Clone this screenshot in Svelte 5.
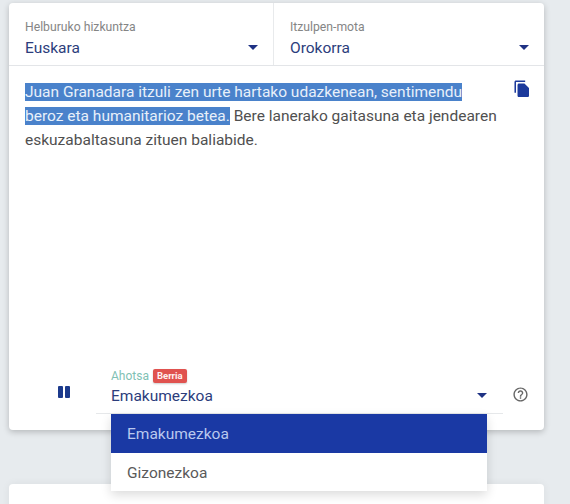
<script>
  const options = ['Emakumezkoa', 'Gizonezkoa'];
  let voice = $state('Emakumezkoa');
</script>

<div class="page">
  <section class="card">
    <header class="selects">
      <div class="select">
        <span class="label">Helburuko hizkuntza</span>
        <span class="value">Euskara</span>
        <i class="caret"></i>
      </div>
      <div class="select">
        <span class="label">Itzulpen-mota</span>
        <span class="value">Orokorra</span>
        <i class="caret"></i>
      </div>
    </header>

    <div class="result">
      <p><span class="said">Juan Granadara itzuli zen urte hartako udazkenean, sentimendu beroz eta humanitarioz betea.</span> Bere lanerako gaitasuna eta jendearen eskuzabaltasuna zituen baliabide.</p>
      <button class="copy" aria-label="Kopiatu">
        <svg viewBox="0 0 24 24" width="17" height="17"><path d="M16 1H4C2.9 1 2 1.9 2 3v14h2V3h12V1zm-1 4 6 6v10c0 1.1-.9 2-2 2H8c-1.1 0-2-.9-2-2l.01-14c0-1.1.89-2 1.99-2h7z" transform="translate(-1.500 -.5) scale(1.08)"/></svg>
      </button>
    </div>

    <footer class="player">
      <button class="pause" aria-label="Pausatu">
        <svg viewBox="0 0 12 12" width="12" height="12"><rect x="0" y="0" width="5" height="12" rx="1"/><rect x="7" y="0" width="5" height="12" rx="1"/></svg>
      </button>
      <div class="voice">
        <div class="voice-label"><span>Ahotsa</span><b>Berria</b></div>
        <span class="value">{voice}</span>
        <i class="caret"></i>
        <ul class="menu">
          {#each options as opt}
            <li class:active={opt === voice}>{opt}</li>
          {/each}
        </ul>
      </div>
      <button class="help" aria-label="Laguntza">
        <svg viewBox="0 0 24 24" width="17" height="17"><path d="M11 18h2v-2h-2v2zm1-16C6.480 2 2 6.480 2 12s4.480 10 10 10 10-4.480 10-10S17.520 2 12 2zm0 18c-4.410 0-8-3.590-8-8s3.590-8 8-8 8 3.590 8 8-3.590 8-8 8zm0-14c-2.210 0-4 1.790-4 4h2c0-1.100.9-2 2-2s2 .9 2 2c0 2-3 1.750-3 5h2c0-2.250 3-2.500 3-5 0-2.210-1.790-4-4-4z"/></svg>
      </button>
    </footer>
  </section>
  <div class="next"></div>
</div>

<style>
  :global(body) {
    margin: 0;
    background: #e7ebee;
    font-family: Roboto, "Liberation Sans", sans-serif;
  }
  .page {
    height: 504px;
    overflow: hidden;
    padding: 3px 26px 0 9px;
    box-sizing: border-box;
  }
  .card {
    height: 427px;
    background: #fff;
    border-radius: 4px;
    box-shadow: 0 2px 6px rgba(0, 0, 0, .22);
    display: flex;
    flex-direction: column;
  }
  .selects {
    display: flex;
    height: 63px;
    flex: none;
    box-sizing: border-box;
    border-bottom: 1px solid #e3e5e8;
  }
  .select {
    flex: 1;
    position: relative;
    padding: 17px 16px 0;
    display: flex;
    flex-direction: column;
  }
  .select:first-child {
    flex: none;
    width: 265px;
    box-sizing: border-box;
    border-right: 1px solid #e8eaec;
  }
  .label {
    font-size: 12.200px;
    line-height: 15px;
    color: #858585;
  }
  .value {
    font-size: 15.500px;
    line-height: 21px;
    margin-top: 3px;
    color: #2c3d7c;
  }
  .caret {
    position: absolute;
    right: 15px;
    top: 42px;
    border: 5px solid transparent;
    border-top: 5.500px solid #1f3284;
    border-bottom: 0;
  }
  .result {
    flex: 1;
    position: relative;
    padding: 14px 43px 0 16px;
  }
  p {
    margin: 0;
    font-size: 15.500px;
    line-height: 24px;
    color: #505050;
  }
  .said {
    background: #4a82cb;
    color: #e8f0fa;
  }
  button {
    background: none;
    border: 0;
    padding: 0;
    display: flex;
  }
  .copy {
    position: absolute;
    top: 14px;
    right: 13px;
    fill: #1c3a9c;
  }
  .player {
    height: 63px;
    flex: none;
    position: relative;
    display: flex;
  }
  .pause {
    fill: #1c3a8c;
    margin: 19px 0 0 49px;
    align-self: flex-start;
  }
  .voice {
    width: 407px;
    height: 47px;
    margin-left: 26px;
    padding: 0 15px;
    box-sizing: border-box;
    position: relative;
    border-bottom: 1px solid #e6e8ea;
  }
  .voice-label {
    display: flex;
    align-items: center;
    gap: 4px;
    height: 16px;
    margin-top: 1px;
    font-size: 12px;
    color: #7fc1b4;
  }
  .voice-label b {
    background: #e0524f;
    color: #fff0f0;
    font-size: 9.500px;
    line-height: 14px;
    padding: 0 4px;
    border-radius: 2px;
    box-shadow: 0 1px 2px rgba(0, 0, 0, .2);
  }
  .voice .value {
    display: block;
    margin-top: 2px;
  }
  .voice .caret {
    right: 16px;
    top: 26px;
  }
  .menu {
    position: absolute;
    left: 15px;
    top: 47px;
    width: 376px;
    margin: 0;
    padding: 0;
    list-style: none;
    background: #fff;
    box-shadow: 0 4px 10px rgba(0, 0, 0, .14);
    z-index: 2;
  }
  .menu li {
    height: 38.500px;
    line-height: 40px;
    padding-left: 16px;
    font-size: 15.500px;
    color: #5a5a5a;
  }
  .menu li.active {
    background: #1a39a4;
    color: #b9c8ee;
  }
  .help {
    fill: #666;
    margin: 19px 0 0 9px;
    align-self: flex-start;
  }
  .next {
    height: 40px;
    margin-top: 54px;
    background: #fff;
    border-radius: 4px;
    box-shadow: 0 0 8px rgba(0, 0, 0, .06);
  }
</style>
